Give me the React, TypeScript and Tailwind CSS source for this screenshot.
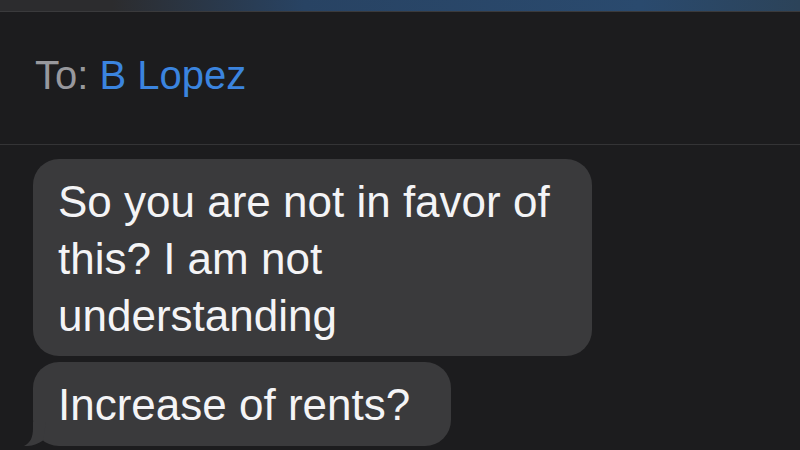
import React from 'react';

const Tail = () => (
  <svg
    className="absolute left-[-10px] bottom-0"
    width="30"
    height="30"
    viewBox="0 0 30 30"
  >
    <path d="M10 6 L10 12 C10 22 7 27 1 30 C8 30.5 15 28 20 24.5 L23 6 Z" fill="#3a3a3c" />
  </svg>
);

const App = () => {
  return (
    <div className="w-[800px] h-[450px] overflow-hidden bg-[#1c1c1e] flex flex-col font-['Liberation_Sans',Arial,sans-serif]">
      {/* status strip */}
      <div className="h-[12px] shrink-0 border-b border-[#3a3a3c] bg-[linear-gradient(90deg,#2c2c2e_0%,#2c2c2e_14%,#284363_38%,#2a4a6e_80%,#2c4359_100%)]" />

      {/* recipient */}
      <div className="h-[133px] shrink-0 pl-[35px] pt-[43px] border-b border-[#343436]">
        <div className="text-[40px] leading-[40px]">
          <span className="text-[#98989d]">To: </span>
          <span className="text-[#3b84df]">B Lopez</span>
        </div>
      </div>

      {/* thread */}
      <div className="flex flex-col items-start gap-[6px] pl-[33px] pt-[14px]">
        <div className="w-[559px] rounded-[26px] bg-[#3a3a3c] pl-[25px] pt-[14px] pb-[12px] text-[44px] leading-[57px] text-[#f4f4f6]">
          So you are not in favor of
          <br />
          this? I am not
          <br />
          understanding
        </div>
        <div className="relative rounded-[26px] bg-[#3a3a3c] pl-[25px] pr-[41px] pt-[14px] pb-[13px] text-[44px] leading-[57px] text-[#f4f4f6]">
          Increase of rents?
          <Tail />
        </div>
      </div>
    </div>
  );
};

export default App;
